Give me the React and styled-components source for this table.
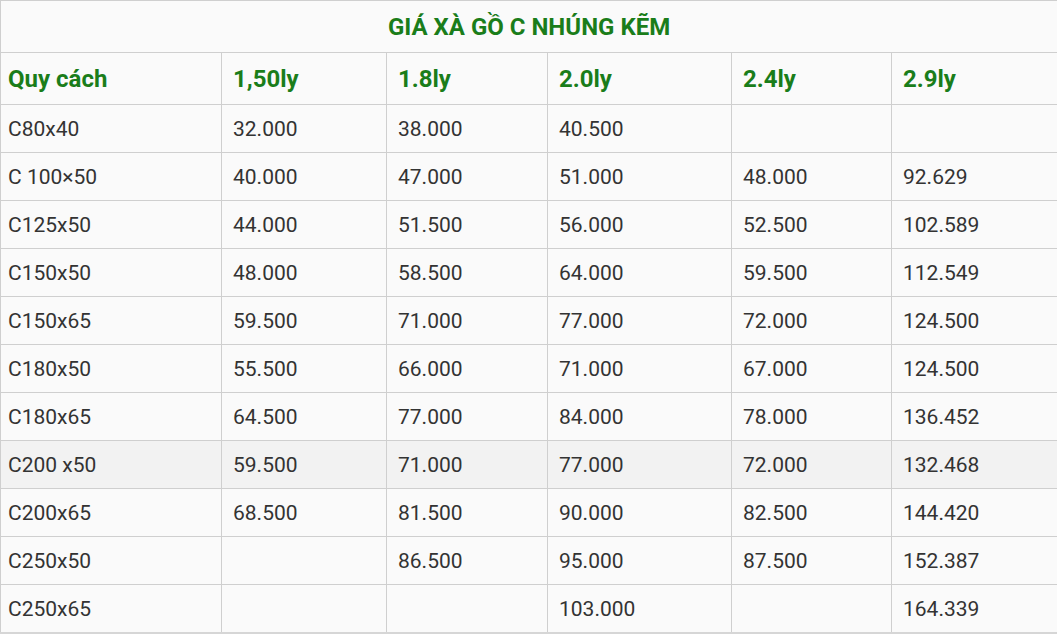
import React from "react";
import styled, { createGlobalStyle } from "styled-components";

const Global = createGlobalStyle`
  html, body { margin: 0; padding: 0; background: #ffffff; }
  body { font-family: Roboto, "Noto Sans", Arial, sans-serif; }
`;

const Table = styled.table`
  width: 1057px;
  border-collapse: collapse;
  table-layout: fixed;
  font-family: Roboto, "Noto Sans", Arial, sans-serif;
  background: #fafafa;
  border-bottom: 2px solid #d6d6d6;
`;

const Row = styled.tr`
  background: ${(p) => (p.$hl ? "#f2f2f2" : "#fafafa")};
`;

const TitleCell = styled.th`
  height: 51px;
  padding: 0;
  border: 1px solid #cfcfcf;
  text-align: center;
  vertical-align: middle;
  color: #1a7d1a;
  font-size: 24px;
  font-weight: 700;
`;

const HeadCell = styled.th`
  height: 51px;
  padding: 0 0 0 11px;
  border: 1px solid #cfcfcf;
  text-align: left;
  vertical-align: middle;
  color: #1a7d1a;
  font-size: 24px;
  font-weight: 700;
  ${(p) => p.$first && "padding-left: 7px;"}
`;

const Cell = styled.td`
  height: 47px;
  padding: 0 0 0 11px;
  border: 1px solid #cfcfcf;
  text-align: left;
  vertical-align: middle;
  color: #333333;
  font-size: 21px;
  font-weight: 400;
  ${(p) => p.$first && "padding-left: 7px;"}
`;

const widths = [221, 165, 161, 184, 160, 166];
const heads = ["Quy cách", "1,50ly", "1.8ly", "2.0ly", "2.4ly", "2.9ly"];
const rows = [
  ["C80x40", "32.000", "38.000", "40.500", "", ""],
  ["C 100×50", "40.000", "47.000", "51.000", "48.000", "92.629"],
  ["C125x50", "44.000", "51.500", "56.000", "52.500", "102.589"],
  ["C150x50", "48.000", "58.500", "64.000", "59.500", "112.549"],
  ["C150x65", "59.500", "71.000", "77.000", "72.000", "124.500"],
  ["C180x50", "55.500", "66.000", "71.000", "67.000", "124.500"],
  ["C180x65", "64.500", "77.000", "84.000", "78.000", "136.452"],
  ["C200 x50", "59.500", "71.000", "77.000", "72.000", "132.468"],
  ["C200x65", "68.500", "81.500", "90.000", "82.500", "144.420"],
  ["C250x50", "", "86.500", "95.000", "87.500", "152.387"],
  ["C250x65", "", "", "103.000", "", "164.339"],
];

export default function App() {
  return (
    <>
      <Global />
      <Table>
        <colgroup>
          {widths.map((w, i) => (
            <col key={i} style={{ width: w }} />
          ))}
        </colgroup>
        <thead>
          <Row>
            <TitleCell colSpan={6}>GIÁ XÀ GỒ C NHÚNG KẼM</TitleCell>
          </Row>
          <Row>
            {heads.map((h, i) => (
              <HeadCell key={i} $first={i === 0}>
                {h}
              </HeadCell>
            ))}
          </Row>
        </thead>
        <tbody>
          {rows.map((r, ri) => (
            <Row key={ri} $hl={ri === 7}>
              {r.map((c, ci) => (
                <Cell key={ci} $first={ci === 0}>
                  {c}
                </Cell>
              ))}
            </Row>
          ))}
        </tbody>
      </Table>
    </>
  );
}
